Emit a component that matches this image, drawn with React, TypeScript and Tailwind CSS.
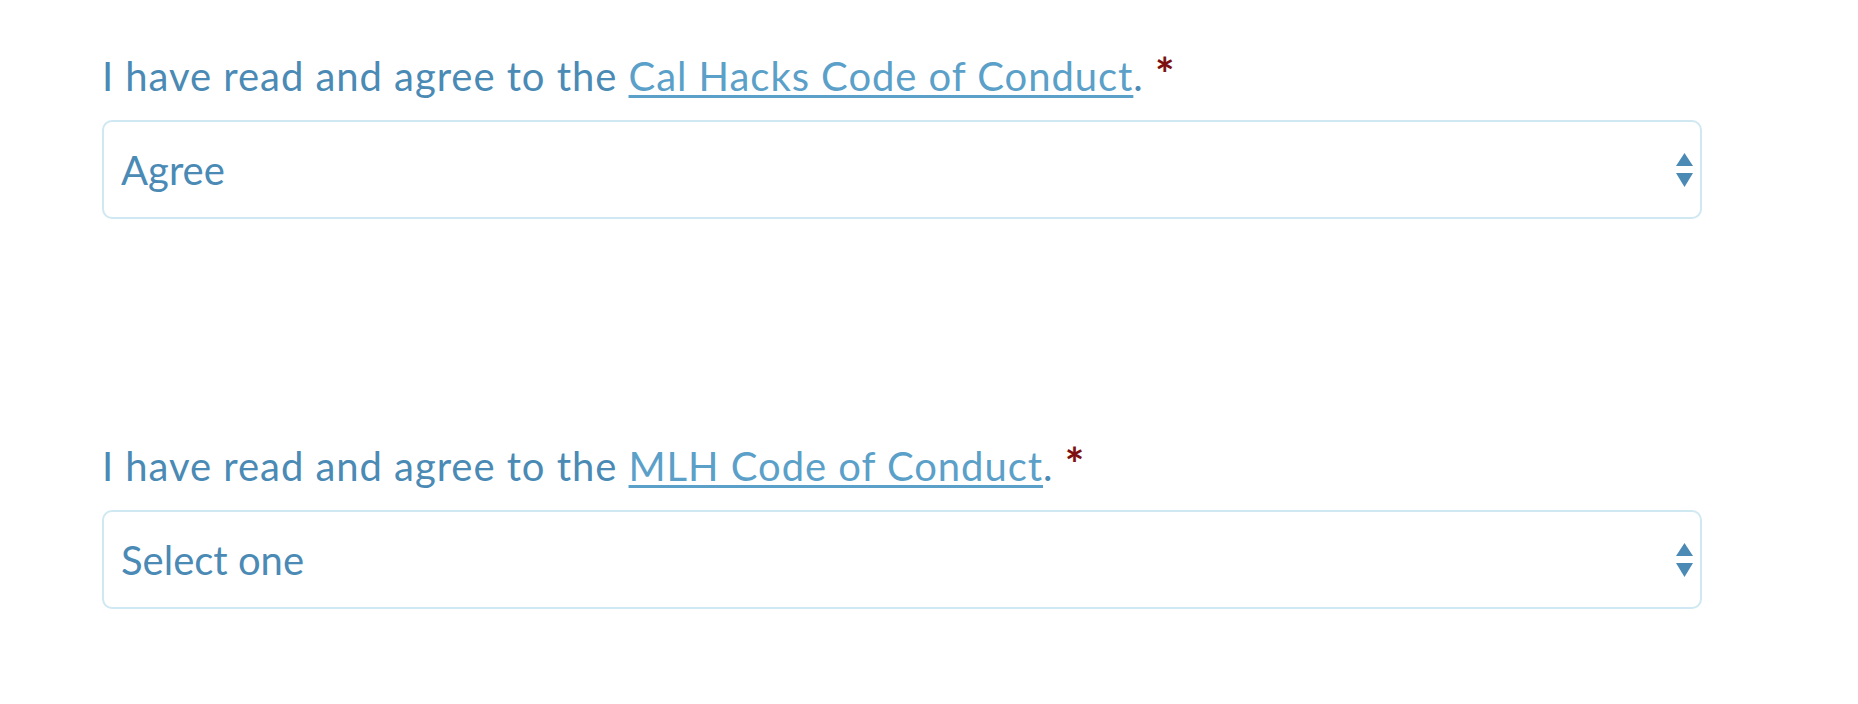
import React from 'react';

const Arrows = () => (
  <svg width="17" height="34" viewBox="0 0 17 34" className="pointer-events-none absolute right-[9px] top-1/2 -translate-y-1/2">
    <polygon points="8.5,0 17,13 0,13" fill="#4a8ab5" />
    <polygon points="0,20 17,20 8.5,34" fill="#4a8ab5" />
  </svg>
);

const Field = ({
  label,
  link,
  value,
  options,
}: {
  label: string;
  link: string;
  value: string;
  options: string[];
}) => (
  <div className="flex flex-col">
    <label className="text-[40px] leading-[48px] tracking-[0.95px] text-[#4a8ab5]">
      {label}{' '}
      <a href="#" className="text-[#5ba0c8] underline decoration-[3px] underline-offset-[4px]">
        {link}
      </a>
      . <span className="text-[46px] leading-[0] font-bold text-[#7d1111]">*</span>
    </label>
    <div className="relative mt-[20px] w-[1600px]">
      <select
        defaultValue={value}
        className="h-[99px] w-full appearance-none rounded-[10px] border-2 border-[#cfe8f1] bg-white pl-[17px] text-[40px] text-[#4a8ab5] outline-none"
        style={{ fontFamily: 'inherit' }}
      >
        {options.map((o) => (
          <option key={o} value={o}>
            {o}
          </option>
        ))}
      </select>
      <Arrows />
    </div>
  </div>
);

export default function App() {
  return (
    <div
      className="min-h-[704px] bg-white pl-[102px] pt-[52px]"
      style={{ fontFamily: 'Lato, "Noto Sans", sans-serif' }}
    >
      <div className="flex flex-col gap-[223px]">
        <Field
          label="I have read and agree to the"
          link="Cal Hacks Code of Conduct"
          value="Agree"
          options={['Select one', 'Agree']}
        />
        <Field
          label="I have read and agree to the"
          link="MLH Code of Conduct"
          value="Select one"
          options={['Select one', 'Agree']}
        />
      </div>
    </div>
  );
}
